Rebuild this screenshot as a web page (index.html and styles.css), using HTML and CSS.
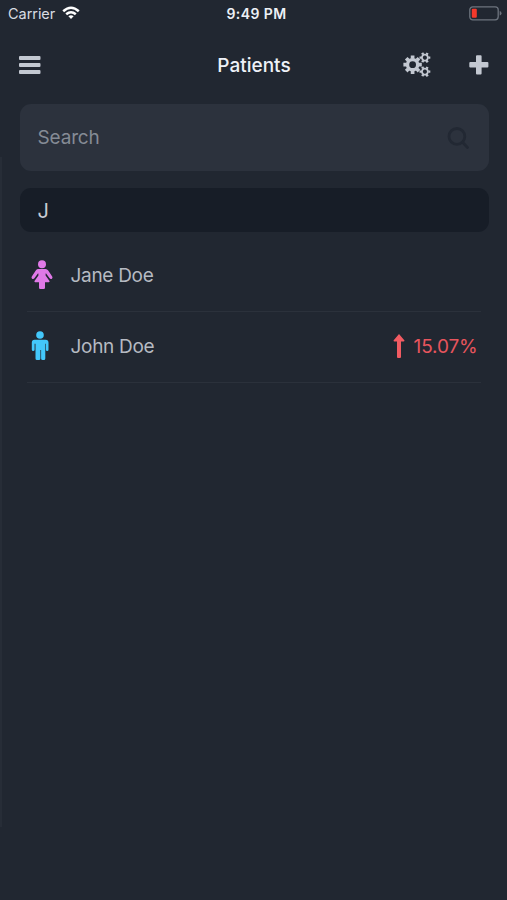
FILE: index.html
```html
<!DOCTYPE html>
<html lang="en">
<head>
<meta charset="utf-8">
<title>Patients</title>
<link rel="stylesheet" href="styles.css">
</head>
<body>
<div class="screen">
  <div class="status">
    <div class="carrier"><span class="carrier-name">Carrier</span>
      <svg class="wifi" width="18" height="14" viewBox="0 0 18 14" fill="none" stroke="#fff" stroke-width="2.5"><path d="M1.2 5.2Q9-1.8 16.8 5.2M4.2 8.3Q9 4.1 13.8 8.3"/><path d="M6.4 10.3Q9 8.2 11.6 10.3L9 13Z" fill="#fff" stroke="none"/></svg>
    </div>
    <span class="time">9:49 PM</span>
    <svg class="battery" width="33" height="15" viewBox="0 0 33 15"><rect x=".8" y=".8" width="28.4" height="13" rx="3" fill="none" stroke="#6d747e" stroke-width="1.3"/><rect x="2.8" y="2.8" width="5" height="9" rx="1" fill="#f5392b"/><path d="M30.7 5v4.6q1.8-.6 1.8-2.3T30.7 5Z" fill="#6d747e"/></svg>
  </div>
  <header class="nav">
    <svg class="menu" width="22" height="18" viewBox="0 0 22 18" fill="#c3c8d1"><rect width="21.5" height="4" rx="1"/><rect y="7" width="21.5" height="4" rx="1"/><rect y="14" width="21.5" height="4" rx="1"/></svg>
    <h1 class="title">Patients</h1>
    <div class="actions">
      <svg width="28" height="26" viewBox="0 0 28 26" fill="none" stroke="#c3c8d1">
        <defs>
          <g id="gear"><circle r="5.1" stroke-width="3.4"/><path stroke-width="3.7" d="M0-9.2V-6M0 9.2V6M-9.2 0H-6M9.2 0H6M-6.4-6.4L-4.3-4.3M6.4 6.4L4.3 4.3M-6.4 6.4L-4.3 4.3M6.4-6.4L4.3-4.3"/></g>
          <g id="small-gear"><circle r="3" stroke-width="1.9"/><path stroke-width="2.4" d="M0-5.3V-3.5M0 5.3V3.5M-4.7-2.7L-3.1-1.8M4.7 2.7L3.1 1.8M-4.7 2.7L-3.1 1.8M4.7-2.7L3.1-1.8"/></g>
        </defs>
        <use href="#gear" x="9.6" y="12.7"/><use href="#small-gear" transform="translate(21.9 5.6) rotate(30)"/><use href="#small-gear" transform="translate(21.9 19.6) rotate(30)"/>
      </svg>
      <svg class="add" width="20" height="20" viewBox="0 0 20 20" fill="#c3c8d1"><path d="M8 .3h3.6q1 0 1 1V7H18.4q1 0 1 1v3.6q0 1-1 1H12.6v5.8q0 1-1 1H8q-1 0-1-1v-5.8H1.3q-1 0-1-1V8q0-1 1-1H7V1.3q0-1 1-1Z"/></svg>
    </div>
  </header>
  <main class="content">
    <div class="search"><span class="search-label">Search</span>
      <svg width="24" height="24" viewBox="0 0 24 24" fill="none" stroke="#222833" stroke-width="2.8"><circle cx="9.9" cy="10.4" r="7.9"/><path d="M15.500 16.200L20.500 21.500" stroke-linecap="round"/></svg>
    </div>
    <div class="section"><span class="section-label">J</span></div>
    <ul class="list">
      <li class="row">
        <svg class="person" width="22" height="30" viewBox="0 0 22 30" fill="#e079e7"><circle cx="11" cy="4.2" r="4"/><path d="M7.4 9h7.2q1.6 0 2.6 1.5l4 6q.8 1.3-.3 2.2-1.3.9-2.3-.4L15.1 13.5h-.5v2l3.900 5.600q.5 1.100-.7 1.100H14v5.600q0 1.300-1.300 1.300H9.300Q8 29.100 8 27.800V22.200H4.200q-1.200 0-.7-1.100l3.900-5.600v-2h-.5L3.400 18.300q-1 1.300-2.300.4-1.100-.9-.3-2.200l4-6Q5.800 9 7.400 9Z"/></svg>
        <span class="name jane">Jane Doe</span>
      </li>
      <li class="row">
        <svg class="person male" width="22" height="30" viewBox="0 0 22 30" fill="#43c8fb"><circle cx="9" cy="4" r="3.8"/><path d="M3.500 8.800H14.500q3 0 3 3v6.900q0 1.300-1.300 1.300t-1.300-1.300v-6h-.6v14.900q0 1.500-1.500 1.500h-1.200q-1.500 0-1.500-1.500V19h-.7v8.600q0 1.500-1.500 1.500H6q-1.500 0-1.500-1.500V12.700h-.9v6Q3.600 20 2.200 20T.8 18.700v-6.900q0-3 2.700-3Z"/></svg>
        <span class="name john">John Doe</span>
        <span class="change"><svg width="12" height="25" viewBox="0 0 12 25" fill="#f25b62"><path d="M6 0L11.500 6.500Q11.500 7.500 10.500 7.500H8V23q0 1-1 1H5q-1 0-1-1V7.500H1.500Q.5 7.500.5 6.500Z"/></svg><span class="percent">15.07%</span></span>
      </li>
    </ul>
  </main>
</div>
</body>
</html>
```
FILE: styles.css
```css
* { box-sizing: border-box; }
body { margin: 0; background: #212731; font-family: Inter, "Liberation Sans", sans-serif; }
svg { display: block; flex: none; }
.screen { width: 507px; height: 900px; background: linear-gradient(#272d37, #272d37) 0 157px / 2px 670px no-repeat #212731; }
.status { height: 28px; padding: 0 5px 0 8px; display: grid; grid-template-columns: 1fr auto 1fr; align-items: center; white-space: nowrap; }
.carrier { display: flex; align-items: center; gap: 7px; color: #d8dce3; font-size: 14.5px; }
.carrier-name { width: 47px; margin-top: -1px; letter-spacing: -.05px; }
.wifi { margin-top: -2px; }
.time { color: #edf0f6; font-size: 14px; font-weight: 600; letter-spacing: .4px; margin: -1px 0 0 3px; }
.battery { justify-self: end; margin-top: -2px; }
.nav { height: 76px; padding: 0 18px 2px 19px; display: grid; grid-template-columns: 1fr auto 1fr; align-items: center; }
.title { margin: 0; color: #eef1f8; font-size: 19px; font-weight: 500; }
.actions { display: flex; align-items: center; justify-content: flex-end; gap: 38px; }
.add { margin-top: -1px; }
.content { padding: 0 18.5px 0 19.5px; }
.search { height: 67px; border-radius: 11px; background: #2c323d; padding: 0 18px; display: flex; align-items: center; justify-content: space-between; color: #858b95; font-size: 19px; }
.search-label { letter-spacing: -.15px; }
.section { height: 44px; margin-top: 17px; border-radius: 11px; background: #171d27; padding: 2px 18px 0; display: flex; align-items: center; color: #c8ccd4; font-size: 20px; }
.list { list-style: none; margin: 9px 8px 0 7px; padding: 0; }
.row { height: 71px; border-bottom: 1px solid #2b313b; padding: 0 4px; display: flex; align-items: center; }
.person { margin-top: -3px; }
.name { color: #b6bac2; font-size: 19px; letter-spacing: -.3px; margin: -2px 0 0 18px; white-space: nowrap; }
.change { display: flex; align-items: center; gap: 9px; margin: -2px -1px 0 auto; color: #e7555d; font-size: 19px; }
.percent { letter-spacing: -.15px; }
```
